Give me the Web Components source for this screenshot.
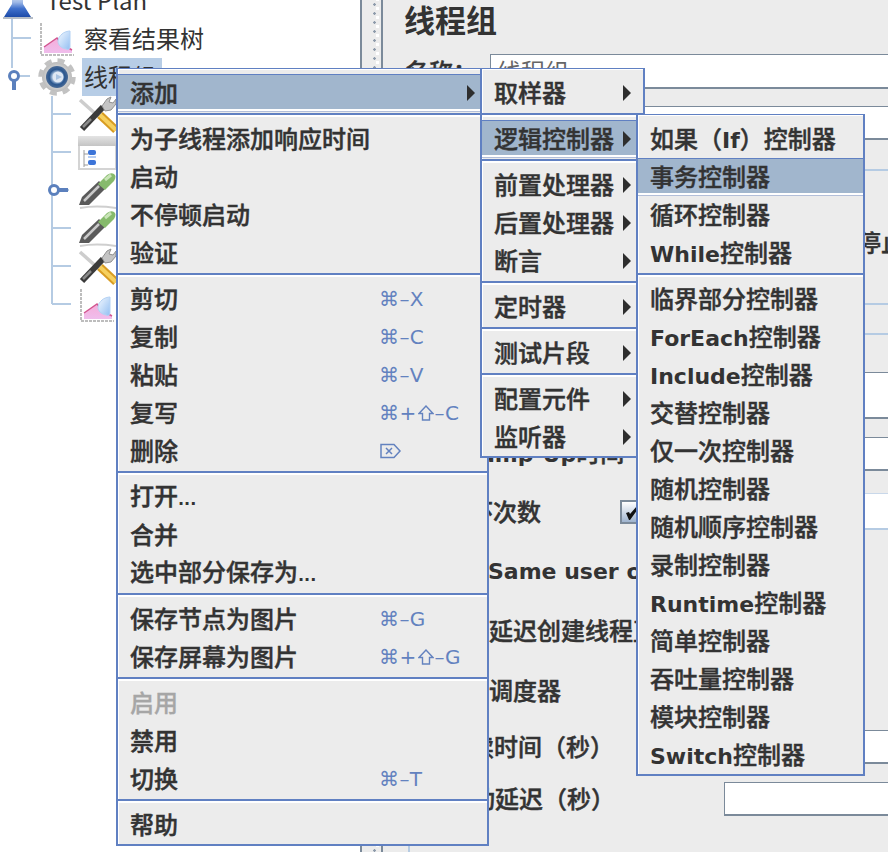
<!DOCTYPE html>
<html lang="zh"><head><meta charset="utf-8"><title>线程组</title>
<style>
html,body{margin:0;padding:0;height:100%;overflow:hidden;background:#ececec}
body{font-family:"Noto Sans CJK SC","DejaVu Sans",sans-serif;color:#333}
</style></head><body>
<jm-app>
  <jm-tree slot="tree">
    <jm-tree-row level="0" icon="flask" style="margin-top:-18px">Test Plan</jm-tree-row>
    <jm-tree-row level="1" icon="chart">察看结果树</jm-tree-row>
    <jm-tree-row level="1" icon="gear" selected>线程组</jm-tree-row>
    <jm-tree-row level="2" icon="tools"></jm-tree-row>
    <jm-tree-row level="2" icon="table"></jm-tree-row>
    <jm-tree-row level="2" icon="dropper"></jm-tree-row>
    <jm-tree-row level="2" icon="dropper"></jm-tree-row>
    <jm-tree-row level="2" icon="tools"></jm-tree-row>
    <jm-tree-row level="2" icon="chart"></jm-tree-row>
  </jm-tree>
  <jm-form slot="form">
    <jm-row style="--h:35px;--mt:12px"><jm-label style="--ml:22px">名称：</jm-label><jm-field style="--w:398px" value="线程组"></jm-field></jm-row>
    <jm-row style="--h:34px;--mt:17px"><jm-field style="--w:398px"></jm-field></jm-row>
    <jm-group>
      <jm-row style="--h:34px;--mt:55px"><jm-label style="--ml:447px">停止</jm-label></jm-row>
      <jm-rule style="--mt:43px"></jm-rule>
      <jm-rule style="--mt:28px"></jm-rule>
      <jm-row style="--h:47px;--mt:37px"><jm-field style="--w:260px"></jm-field></jm-row>
      <jm-row style="--h:34px;--mt:18px"><jm-label style="--ml:53px"><jm-latin>Ramp-Up</jm-latin>时间（秒）：</jm-label><jm-field style="--w:260px"></jm-field></jm-row>
      <jm-row style="--h:37px;--mt:22px"><jm-label style="--ml:35px;--w:175px">循环次数</jm-label><jm-check></jm-check><jm-field soft style="--w:260px"></jm-field></jm-row>
      <jm-row style="--h:34px;--mt:24px"><jm-label style="--ml:78px"><jm-latin>Same user on each iteration</jm-latin></jm-label></jm-row>
      <jm-row style="--h:34px;--mt:26px"><jm-label style="--ml:79px">延迟创建线程直到需要</jm-label></jm-row>
      <jm-row style="--h:34px;--mt:26px"><jm-label style="--ml:79px">调度器</jm-label></jm-row>
      <jm-row style="--h:34px;--mt:22px"><jm-label style="--ml:36px">持续时间（秒）</jm-label><jm-field style="--w:176px"></jm-field></jm-row>
      <jm-row style="--h:34px;--mt:18px"><jm-label style="--ml:37px">启动延迟（秒）</jm-label><jm-field style="--w:176px"></jm-field></jm-row>
    </jm-group>
  </jm-form>

  <jm-menu style="--x:116px;--y:68px;--w:373px">
    <jm-item active arrow>添加</jm-item>
    <jm-sep></jm-sep>
    <jm-item>为子线程添加响应时间</jm-item>
    <jm-item>启动</jm-item>
    <jm-item>不停顿启动</jm-item>
    <jm-item>验证</jm-item>
    <jm-sep></jm-sep>
    <jm-item key="⌘–X">剪切</jm-item>
    <jm-item key="⌘–C">复制</jm-item>
    <jm-item key="⌘–V">粘贴</jm-item>
    <jm-item key="⌘+⇧–C">复写</jm-item>
    <jm-item key="⌦">删除</jm-item>
    <jm-sep></jm-sep>
    <jm-item>打开<jm-latin style="font-size:16px">...</jm-latin></jm-item>
    <jm-item>合并</jm-item>
    <jm-item>选中部分保存为<jm-latin style="font-size:16px">...</jm-latin></jm-item>
    <jm-sep></jm-sep>
    <jm-item key="⌘–G">保存节点为图片</jm-item>
    <jm-item key="⌘+⇧–G">保存屏幕为图片</jm-item>
    <jm-sep></jm-sep>
    <jm-item disabled>启用</jm-item>
    <jm-item>禁用</jm-item>
    <jm-item key="⌘–T">切换</jm-item>
    <jm-sep></jm-sep>
    <jm-item>帮助</jm-item>
  </jm-menu>

  <jm-menu style="--x:480px;--y:68px;--w:165px">
    <jm-item arrow>取样器</jm-item>
    <jm-sep></jm-sep>
    <jm-item active arrow>逻辑控制器</jm-item>
    <jm-sep></jm-sep>
    <jm-item arrow>前置处理器</jm-item>
    <jm-item arrow>后置处理器</jm-item>
    <jm-item arrow>断言</jm-item>
    <jm-sep></jm-sep>
    <jm-item arrow>定时器</jm-item>
    <jm-sep></jm-sep>
    <jm-item arrow>测试片段</jm-item>
    <jm-sep></jm-sep>
    <jm-item arrow>配置元件</jm-item>
    <jm-item arrow>监听器</jm-item>
  </jm-menu>

  <jm-menu style="--x:636px;--y:114px;--w:229px">
    <jm-item>如果（<jm-latin>If</jm-latin>）控制器</jm-item>
    <jm-item active>事务控制器</jm-item>
    <jm-item>循环控制器</jm-item>
    <jm-item><jm-latin>While</jm-latin>控制器</jm-item>
    <jm-sep></jm-sep>
    <jm-item>临界部分控制器</jm-item>
    <jm-item><jm-latin>ForEach</jm-latin>控制器</jm-item>
    <jm-item><jm-latin>Include</jm-latin>控制器</jm-item>
    <jm-item>交替控制器</jm-item>
    <jm-item>仅一次控制器</jm-item>
    <jm-item>随机控制器</jm-item>
    <jm-item>随机顺序控制器</jm-item>
    <jm-item>录制控制器</jm-item>
    <jm-item><jm-latin>Runtime</jm-latin>控制器</jm-item>
    <jm-item>简单控制器</jm-item>
    <jm-item>吞吐量控制器</jm-item>
    <jm-item>模块控制器</jm-item>
    <jm-item><jm-latin>Switch</jm-latin>控制器</jm-item>
  </jm-menu>
</jm-app>
<script>
const CJK='"Noto Sans CJK SC","DejaVu Sans",sans-serif';
function def(name,css,html,extra){
  customElements.define(name,class extends HTMLElement{
    constructor(){super();const r=this.attachShadow({mode:'open'});r.innerHTML=`<style>${css}</style>${html}`;}
    connectedCallback(){if(extra)extra(this,this.shadowRoot);}
  });
}
const ICONS={
flask:`<svg width="38" height="38" viewBox="0 0 38 38"><defs><linearGradient id="f" x1="0" x2="0" y1="0" y2="1"><stop offset="0" stop-color="#d5dff1"/><stop offset=".3" stop-color="#9db8e6"/><stop offset=".6" stop-color="#3f70cc"/><stop offset="1" stop-color="#1c4aa8"/></linearGradient></defs><path d="M12 14h11v8l8 13H4l8-13z" fill="url(#f)"/><path d="M3 36h30" stroke="#b4bcc6" stroke-width="2"/></svg>`,
chart:`<svg width="38" height="38" viewBox="0 0 38 38"><defs><linearGradient id="c" x1="0" x2="0" y1="0" y2="1"><stop offset="0" stop-color="#f6aeda"/><stop offset="1" stop-color="#efbdec"/></linearGradient><linearGradient id="b" x1="0" x2="1" y1="0" y2="1"><stop offset="0" stop-color="#f4f9ff"/><stop offset="1" stop-color="#93bff2"/></linearGradient></defs><path d="M3 3v32h33" fill="none" stroke="#bdbdbd" stroke-width="2" stroke-dasharray="3 1"/><path d="M6 33v-6l13-9 3 4 5 4 7 4v3z" fill="url(#c)"/><path d="M6 27l13-9 3 4 5 4 7 4" fill="none" stroke="#d2558f" stroke-width="1.5"/><path d="M24 14c2-2 6-3 8-3v16c0 2-2 3-4 2-5-1-8-4-8-8 0-3 2-5 4-7z" fill="url(#b)" stroke="#b4d2f4"/></svg>`,
gear:`<svg width="38" height="38" viewBox="0 0 38 38"><defs><radialGradient id="g1"><stop offset=".5" stop-color="#e2e2e2"/><stop offset="1" stop-color="#b8b8b8"/></radialGradient><radialGradient id="g2"><stop offset=".45" stop-color="#9db8d8"/><stop offset=".7" stop-color="#2a568f"/><stop offset="1" stop-color="#4a6a94"/></radialGradient></defs><circle cx="19" cy="19" r="15" fill="url(#g1)"/><circle cx="19" cy="19" r="16.5" fill="none" stroke="#c2c2c2" stroke-width="4.5" stroke-dasharray="7 5.96"/><circle cx="19" cy="19" r="11" fill="url(#g2)"/><circle cx="20" cy="19" r="5.5" fill="#dfe8f4"/><path d="M18 16l6 3-6 3z" fill="#a9c3e2"/></svg>`,
tools:`<svg width="38" height="38" viewBox="0 0 38 38"><path d="M2 4l19 17" stroke="#cdcdcd" stroke-width="3.5"/><path d="M22 19l16 15" stroke="#d89c22" stroke-width="8"/><path d="M22 19l16 15" stroke="#f6d05e" stroke-width="4"/><path d="M4 33L25 11" stroke="#3a3a3a" stroke-width="6"/><path d="M5 31l8-8" stroke="#8a8a8a" stroke-width="2.5"/><path d="M24 10l5-7 4-2-2 5 4 1 3-4 0 5-5 6-6 1z" fill="#c4c4c4" stroke="#909090"/></svg>`,
table:`<svg width="38" height="38" viewBox="0 0 38 38"><defs><linearGradient id="t" x1="0" x2="0" y1="0" y2="1"><stop offset="0" stop-color="#e4e4e4"/><stop offset="1" stop-color="#c4c4c4"/></linearGradient></defs><rect x="1" y="3" width="37" height="32" fill="#fff" stroke="#d4d4d4" stroke-width="2"/><rect x="0" y="2" width="38" height="10" fill="url(#t)"/><path d="M6 16v17M6 20h4M6 31h4" fill="none" stroke="#9a9a9a"/><rect x="10" y="16" width="8" height="5" rx="2" fill="#3c74d8"/><rect x="10" y="22" width="8" height="2" fill="#b6cdf2"/><rect x="10" y="26" width="8" height="5" rx="2" fill="#3c74d8"/></svg>`,
dropper:`<svg width="38" height="38" viewBox="0 0 38 38"><path d="M2 36q16-3 36 0" fill="none" stroke="#cfcfcf" stroke-width="2"/><path d="M1 33l3-8 17-16 7 7-17 17z" fill="#5a5a5a"/><path d="M6 29l15-15" stroke="#c9c9c9" stroke-width="2.5"/><path d="M20 12l9-9q4-3 7-1t0 7l-9 9z" fill="#86ba6c"/><path d="M27 8l6-5" stroke="#c9e4b8" stroke-width="3"/></svg>`
};
def('jm-app',`:host{display:block;position:relative;width:888px;height:852px;overflow:hidden}
.main{display:grid;grid-template-columns:360px 23px 505px;height:852px}
.split{box-sizing:border-box;border-left:2px solid #7b8a9a;border-right:2px solid #7b8a9a;background-color:#ececec;
background-image:radial-gradient(circle,#8e9bab 1.1px,transparent 1.5px),radial-gradient(circle,#fff 1.7px,transparent 2px);background-size:5px 9px,5px 9px;background-position:10px 0,13px 4px;background-repeat:repeat-y}`,
`<div class="main"><slot name="tree"></slot><div class="split"></div><slot name="form"></slot></div><slot></slot>`);
def('jm-tree',`:host{display:block;position:relative;background:#fff;height:852px;overflow:hidden;font:400 24px ${CJK};color:#333}
svg{position:absolute;left:0;top:0}`,
`<slot></slot><svg width="120" height="320" fill="none"><g stroke="#b5cbe3" stroke-width="2"><path d="M12 18v50M12 38h19M20 76h10M52 96v208M52 114h19M52 152h19M60 190h9M52 228h19M52 266h19M52 304h19"/></g>
<g stroke="#5b80bd"><circle cx="14" cy="76" r="4.5" stroke-width="3" fill="#fff"/><path d="M14 81v9" stroke-width="4"/><circle cx="54" cy="190" r="4.5" stroke-width="3" fill="#fff"/><path d="M59 190h9" stroke-width="4"/></g></svg>`);
def('jm-tree-row',`:host{display:flex;align-items:center;height:38px;position:relative;z-index:1;white-space:nowrap}
.ic{width:38px;height:38px;flex:none}.ic svg{display:block}
.t{margin-left:6px;padding:0 6px 0 2px;line-height:36px;height:38px}
:host([selected]) .t{background:#b7cde6}`,
`<span class="ic"></span><span class="t"><slot></slot></span>`,
(h,r)=>{const l=+h.getAttribute('level');h.style.paddingLeft=[0,38,78][l]+'px';r.querySelector('.ic').innerHTML=ICONS[h.getAttribute('icon')];});
def('jm-form',`:host{display:block;background:#ececec;height:852px;overflow:hidden;color:#333}
h1{margin:0;height:42px;padding-left:21px;font:700 31px/38px ${CJK}}`,
`<h1>线程组</h1><slot></slot>`);
def('jm-group',`:host{display:block;box-sizing:border-box;margin:29px -12px 0 25px;border-top:2px solid #b5cbe3;border-left:2px solid #b5cbe3;padding-bottom:60px}`,`<slot></slot>`);
def('jm-rule',`:host{display:block;margin-top:var(--mt,0);border-top:2px solid #b5cbe3}`,``);
def('jm-row',`:host{display:flex;align-items:center;height:var(--h);margin-top:var(--mt,0);white-space:nowrap;overflow:hidden}`,`<slot></slot>`);
def('jm-label',`:host{display:block;flex:none;margin-left:var(--ml,0);width:var(--w,auto);padding-bottom:2px;font:500 24px/32px ${CJK};color:#333;-webkit-text-stroke:.45px #333}`,`<slot></slot>`);
def('jm-latin',`:host{display:inline;font:700 22px/32px "DejaVu Sans",sans-serif;-webkit-text-stroke:0 transparent}`,`<slot></slot>`);
def('jm-field',`:host{display:block;flex:none;box-sizing:border-box;margin-left:auto;align-self:stretch;width:var(--w);background:#fff;border-top:1px solid #7b8a9a;border-left:1px solid #7b8a9a;border-bottom:2px solid #7b8a9a;font:400 24px/31px ${CJK};color:#666;padding-left:6px;-webkit-text-stroke:0 transparent}
:host([soft]){border-top-color:#c9d8ea;border-bottom-color:#b5cbe3}`,`<span></span>`,
(h,r)=>{r.querySelector('span').textContent=h.getAttribute('value')||'';});
def('jm-check',`:host{display:block;flex:none;box-sizing:border-box;width:26px;height:24px;border:2px solid #7b8a9a;background:linear-gradient(#fff,#9fb4cf)}
svg{display:block}`,`<svg width="22" height="20" viewBox="0 0 22 20"><path d="M4 11l3-1 1 2 7-8 1 3-8 11h-1z" fill="#111"/></svg>`);
def('jm-menu',`:host{display:block;position:absolute;z-index:5;left:var(--x);top:var(--y);width:var(--w);box-sizing:border-box;background:#ececec;
border:1px solid #6080c2;border-left-width:2px;border-right-width:2px;border-bottom-width:2px;padding-top:5px;box-shadow:inset 1px 1px 0 #fff;
font:500 24px/38px ${CJK};color:#333}`,`<slot></slot>`);
def('jm-item',`:host{display:flex;align-items:center;box-sizing:border-box;height:38px;padding:0 12px;white-space:nowrap;position:relative;-webkit-text-stroke:.45px #333}
:host([active]){background:linear-gradient(#a1b6cd 0 35px,#fff 35px 37px,#b3bfd9 37px);box-shadow:inset 0 1px 0 #6080c2}
:host([disabled]){color:#a6a6a6;-webkit-text-stroke:.3px #a6a6a6}
.l{flex:1;padding-bottom:2px}.k{flex:none;display:flex;align-items:center;width:96px;font:400 20px/38px "DejaVu Sans",sans-serif;color:#6382bf;-webkit-text-stroke:0 transparent;letter-spacing:.4px}
.k svg{display:block;margin:0 1px}
.a{flex:none;width:0;height:0;border-left:8px solid #2e2e2e;border-top:8px solid transparent;border-bottom:8px solid transparent}`,
`<span class="l"><slot></slot></span>`,
(h,r)=>{if(h.hasAttribute('arrow')){const a=document.createElement('span');a.className='a';r.appendChild(a);}
const k=h.getAttribute('key');if(k){const s=document.createElement('span');s.className='k';
if(k==='⌦'){s.innerHTML='<svg width="22" height="16" viewBox="0 0 22 16" fill="none" stroke="#6382bf" stroke-width="1.5" aria-label="⌦"><path d="M1 1.5h13l6 6.5-6 6.5H1z"/><path d="M6 5l6 6M12 5l-6 6"/></svg>';}
else s.innerHTML=k.replace('⇧','<svg width="16" height="16" viewBox="0 0 16 16" fill="none" stroke="#6382bf" stroke-width="1.4" aria-label="⇧"><path d="M8 1L1 8.5h3.5V15h7V8.5H15z"/></svg>');
r.appendChild(s);}});
def('jm-sep',`:host{display:block;box-sizing:border-box;height:8px;padding-top:1px}
i{display:block;height:2px;background:#6080c2;box-shadow:0 2px 0 #fff}`,`<i></i>`);
</script>
</body></html>
